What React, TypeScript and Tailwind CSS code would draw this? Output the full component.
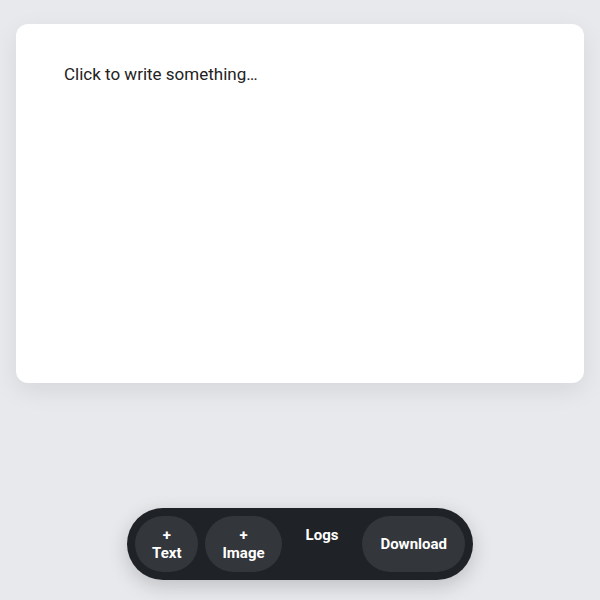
export default function App() {
  return (
    <div className="flex h-screen flex-col items-center justify-between bg-[#e8e9ed] px-4 pt-6 pb-5 font-['Roboto',sans-serif]">
      {/* Editor card */}
      <div className="h-[359px] w-full rounded-xl bg-white px-12 pt-[38px] shadow-[0_8px_24px_rgba(0,0,0,0.08)]">
        <p className="text-[17px] leading-6 text-[#222]">Click to write something…</p>
      </div>

      {/* Toolbar */}
      <div className="flex items-stretch gap-[7px] rounded-full bg-[#1f2226] p-2 shadow-[0_6px_20px_rgba(0,0,0,0.18)]">
        <button className="h-14 rounded-full bg-[#33363b] px-[17px] text-[15px] leading-[18px] font-bold text-white">
          +<br />Text
        </button>
        <button className="h-14 rounded-full bg-[#33363b] px-[17px] text-[15px] leading-[18px] font-bold text-white">
          +<br />Image
        </button>
        <span className="px-[17px] pt-[10px] text-[15px] leading-[18px] font-bold text-white">Logs</span>
        <button className="h-14 rounded-full bg-[#33363b] px-[18px] text-[15px] leading-[18px] font-bold text-white">
          Download
        </button>
      </div>
    </div>
  );
}
